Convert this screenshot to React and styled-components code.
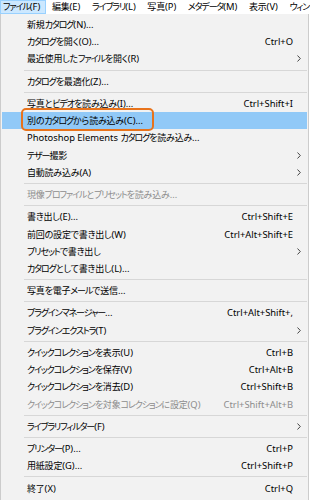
import React from "react";
import styled, { createGlobalStyle } from "styled-components";

const GlobalStyle = createGlobalStyle`
  html, body {
    margin: 0;
    padding: 0;
    background: #fff;
  }
`;

const Window = styled.div`
  width: 310px;
  height: 500px;
  overflow: hidden;
  background: #fff;
  font-family: "Noto Sans", "Noto Sans CJK JP", sans-serif;
  font-size: 9.4px;
  color: #000;
`;

// Japanese runs: proportional, tight katakana like the Yu Gothic UI of the original
const Jp = styled.span`
  font-family: "Noto Sans CJK JP", sans-serif;
  font-size: 9px;
  letter-spacing: ${(p) => (p.$kana ? "-1.1px" : "-0.2px")};
  font-feature-settings: "palt" 1;
`;

const Txt = ({ children }) =>
  children
    .split(/([\u30a0-\u30ff]+|[\u3000-\u309f\u4e00-\u9fff\uff00-\uffef]+)/)
    .map((s, i) =>
      i % 2 ? (
        <Jp key={i} $kana={/[\u30a0-\u30ff]/.test(s)}>
          {s}
        </Jp>
      ) : (
        s
      )
    );

const MenuBar = styled.div`
  display: flex;
  height: 14px;
  white-space: nowrap;
`;

const MenuTitle = styled.div`
  box-sizing: border-box;
  height: 14px;
  line-height: 12px;
  padding: 0 5px 0 2px;
  margin-right: 2.6px;
  border: 1px solid ${(p) => (p.$open ? "#99d1ff" : "transparent")};
  background: ${(p) => (p.$open ? "#cce8ff" : "transparent")};
`;

const Panel = styled.div`
  box-sizing: border-box;
  width: 309px;
  height: 486px;
  padding: 2px 1px 0 1px;
  background: #f2f2f2;
  border-left: 1px solid #cccccc;
  border-right: 1px solid #cccccc;
`;

const Item = styled.div`
  position: relative;
  display: flex;
  align-items: center;
  height: 17.2px;
  padding-left: 25px;
  white-space: nowrap;
  color: ${(p) => (p.$disabled ? "#8d8d8d" : "#000")};
  background: ${(p) => (p.$hover ? "#91c9f7" : "transparent")};
`;

const Label = styled.span`
  flex: 1;
`;

const Shortcut = styled.span`
  padding-right: 1px;
`;

const ArrowCell = styled.span`
  display: flex;
  align-items: center;
  justify-content: center;
  width: 10px;
  margin-right: 3px;
`;

const Separator = styled.div`
  height: 5.1px;
  display: flex;
  align-items: center;
  margin-left: 22px;

  &::before {
    content: "";
    flex: 1;
    height: 1px;
    background: #d7d7d7;
  }
`;

const Callout = styled.div`
  position: absolute;
  left: 18.5px;
  top: -4px;
  width: 133px;
  height: 23px;
  box-sizing: border-box;
  border: 2.5px solid #e8731c;
  border-radius: 5px;
  pointer-events: none;
`;

const Chevron = () => (
  <svg width="4" height="7" viewBox="0 0 4 7">
    <path d="M0.5 0.5 L3.3 3.5 L0.5 6.5" fill="none" stroke="#333" strokeWidth="0.9" />
  </svg>
);

const titles = ["ファイル(F)", "編集(E)", "ライブラリ(L)", "写真(P)", "メタデータ(M)", "表示(V)", "ウィンドウ(W)"];

const menu = [
  { label: "新規カタログ(N)..." },
  { label: "カタログを開く(O)...", key: "Ctrl+O" },
  { label: "最近使用したファイルを開く(R)", sub: true },
  "-",
  { label: "カタログを最適化(Z)..." },
  "-",
  { label: "写真とビデオを読み込み(I)...", key: "Ctrl+Shift+I" },
  { label: "別のカタログから読み込み(C)...", hover: true },
  { label: "Photoshop Elements カタログを読み込み..." },
  { label: "テザー撮影", sub: true },
  { label: "自動読み込み(A)", sub: true },
  "-",
  { label: "現像プロファイルとプリセットを読み込み...", disabled: true },
  "-",
  { label: "書き出し(E)...", key: "Ctrl+Shift+E" },
  { label: "前回の設定で書き出し(W)", key: "Ctrl+Alt+Shift+E" },
  { label: "プリセットで書き出し", sub: true },
  { label: "カタログとして書き出し(L)..." },
  "-",
  { label: "写真を電子メールで送信..." },
  "-",
  { label: "プラグインマネージャー...", key: "Ctrl+Alt+Shift+," },
  { label: "プラグインエクストラ(T)", sub: true },
  "-",
  { label: "クイックコレクションを表示(U)", key: "Ctrl+B" },
  { label: "クイックコレクションを保存(V)", key: "Ctrl+Alt+B" },
  { label: "クイックコレクションを消去(D)", key: "Ctrl+Shift+B" },
  { label: "クイックコレクションを対象コレクションに設定(Q)", key: "Ctrl+Shift+Alt+B", disabled: true },
  "-",
  { label: "ライブラリフィルター(F)", sub: true },
  "-",
  { label: "プリンター(P)...", key: "Ctrl+P" },
  { label: "用紙設定(G)...", key: "Ctrl+Shift+P" },
  "-",
  { label: "終了(X)", key: "Ctrl+Q" },
];

export default function App() {
  return (
    <Window>
      <GlobalStyle />
      <MenuBar>
        {titles.map((t, i) => (
          <MenuTitle key={t} $open={i === 0}>
            <Txt>{t}</Txt>
          </MenuTitle>
        ))}
      </MenuBar>
      <Panel>
        {menu.map((m, i) =>
          m === "-" ? (
            <Separator key={i} />
          ) : (
            <Item key={i} $hover={m.hover} $disabled={m.disabled}>
              <Label>
                <Txt>{m.label}</Txt>
              </Label>
              {m.key && <Shortcut>{m.key}</Shortcut>}
              <ArrowCell>{m.sub && <Chevron />}</ArrowCell>
              {m.hover && <Callout />}
            </Item>
          )
        )}
      </Panel>
    </Window>
  );
}
